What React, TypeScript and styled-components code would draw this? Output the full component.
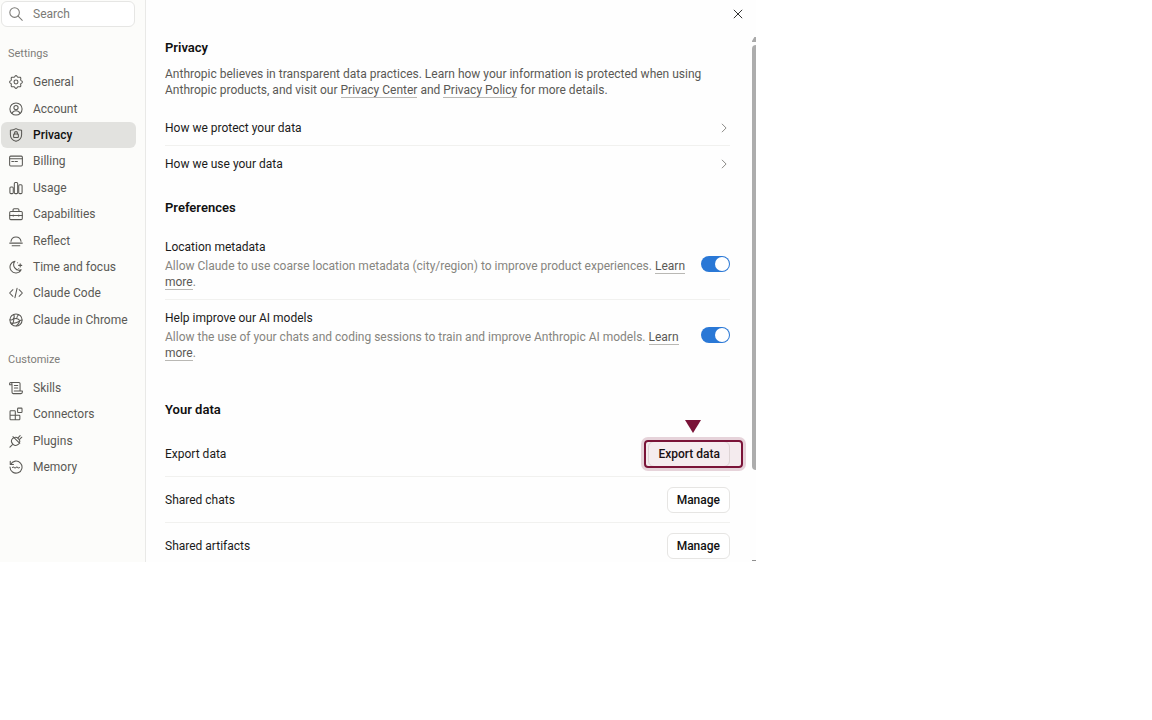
import React from "react";
import styled, { createGlobalStyle } from "styled-components";

const GlobalStyle = createGlobalStyle`
  * { box-sizing: border-box; }
  body {
    margin: 0;
    background: #fff;
    color: #1b1b1a;
    font-family: Roboto, "Liberation Sans", sans-serif;
    font-size: 12px;
    line-height: 16px;
  }
  button, input { font: inherit; color: inherit; }
  h1, h2, p, ul { margin: 0; padding: 0; }
`;

const Dialog = styled.div`
  display: flex;
  width: 100%;
  max-width: 756px;
  background: #fefefe;
`;

const Sidebar = styled.aside`
  flex: 0 0 146px;
  min-width: 0;
  padding: 1px 10px 0 1px;
  background: #fcfcfa;
  border-right: 1px solid #e9e9e7;
`;

const SearchBox = styled.label`
  display: flex;
  align-items: center;
  gap: 10px;
  height: 26px;
  padding: 0 7px;
  border: 1px solid #e6e6e4;
  border-radius: 6px;
  background: #fff;
  color: #7b7a76;
`;

const SearchInput = styled.input`
  flex: 1;
  width: 100%;
  min-width: 0;
  padding: 0;
  border: 0;
  outline: 0;
  background: none;
  &::placeholder { color: #7b7a76; opacity: 1; }
`;

const GroupLabel = styled.h2`
  padding: 19px 7px 0;
  color: #7e7d79;
  font-size: 11px;
  font-weight: 400;
  line-height: 16px;
`;

const NavList = styled.ul<{ $height: number }>`
  display: grid;
  grid-auto-rows: 1fr;
  min-height: ${(p) => p.$height}px;
  margin: 7px 0 0;
  list-style: none;
`;

const NavLink = styled.a<{ $active?: boolean }>`
  display: flex;
  align-items: center;
  gap: 10px;
  height: 100%;
  padding: 0 8px;
  border-radius: 6px;
  background: ${(p) => (p.$active ? "#e2e2df" : "transparent")};
  color: ${(p) => (p.$active ? "#111" : "#5a5955")};
  font-weight: ${(p) => (p.$active ? 500 : 400)};
  text-decoration: none;
  white-space: nowrap;
  svg { color: #5a5955; }
`;

const Icon = styled.svg.attrs({
  viewBox: "0 0 20 20",
  fill: "none",
  stroke: "currentColor",
  strokeLinecap: "round",
  strokeLinejoin: "round",
  "aria-hidden": true,
})<{ $size?: number }>`
  flex: none;
  width: ${(p) => p.$size ?? 14}px;
  height: ${(p) => p.$size ?? 14}px;
  stroke-width: 1.5;
`;

const Main = styled.main`
  display: flex;
  flex: 1;
  flex-direction: column;
  min-width: 0;
`;

const Header = styled.header`
  display: flex;
  justify-content: flex-end;
  height: 37px;
  padding: 4px 8px 0;
`;

const CloseButton = styled.button`
  display: flex;
  align-items: center;
  justify-content: center;
  width: 20px;
  height: 20px;
  padding: 0;
  border: 0;
  background: none;
`;

const ScrollArea = styled.div`
  display: flex;
  flex: 1;
`;

const Content = styled.div`
  flex: 1;
  min-width: 0;
  padding: 1px 22px 0 19px;
`;

const ScrollTrack = styled.div`
  display: flex;
  flex: 0 0 4px;
  flex-direction: column;
  justify-content: space-between;
  overflow: hidden;
`;

const ScrollUp = styled.div`
  height: 5px;
  background: #a9a9a9;
  clip-path: polygon(0 80%, 60% 0, 100% 0, 100% 100%, 0 100%);
`;

const ScrollThumb = styled.div`
  flex: 0 1 81%;
  margin: 3px 0 auto;
  border-radius: 4px 0 0 4px;
  background: #adadad;
`;

const ScrollDown = styled.div`
  height: 2px;
  background: linear-gradient(#8f8f8f 1px, transparent 1px);
`;

const SectionTitle = styled.h2<{ $gap?: number }>`
  padding-top: ${(p) => p.$gap ?? 0}px;
  color: #111;
  font-size: 13px;
  font-weight: 600;
  line-height: 20px;
`;

const Intro = styled.p`
  margin: 8px 0 12px;
  color: #5a5955;
`;

const TextLink = styled.a`
  color: #5a5955;
  text-decoration: none;
  border-bottom: 1px solid #b9b8b4;
`;

const Disclosure = styled.button<{ $last?: boolean }>`
  display: flex;
  align-items: center;
  justify-content: space-between;
  width: 100%;
  height: 36px;
  padding: 0;
  border: 0;
  border-bottom: 1px solid ${(p) => (p.$last ? "transparent" : "#f1f1ef")};
  background: none;
  text-align: left;
  svg { color: #7e7d79; }
`;

const Rows = styled.div`
  margin-top: 11px;
`;

const PreferenceRow = styled.div`
  display: flex;
  align-items: center;
  gap: 12px;
  padding: 9px 0;
  & + & { border-top: 1px solid #f1f1ef; }
`;

const PreferenceText = styled.div`
  flex: 1;
  min-width: 0;
`;

const PreferenceLabel = styled.label`
  display: block;
  margin-bottom: 2px;
  line-height: 18px;
`;

const Hint = styled.p`
  color: #86857f;
`;

const Toggle = styled.input.attrs({ type: "checkbox", role: "switch" })`
  appearance: none;
  flex: none;
  display: flex;
  align-items: center;
  justify-content: flex-start;
  width: 29px;
  height: 16px;
  margin: 0;
  padding: 0 1px;
  border-radius: 8px;
  background: #c9c8c4;
  &::before {
    content: "";
    width: 14px;
    height: 14px;
    border-radius: 50%;
    background: #fff;
  }
  &:checked { justify-content: flex-end; background: #2a78d6; }
`;

const DataRow = styled.div`
  display: flex;
  align-items: center;
  justify-content: space-between;
  padding: 10px 0 9px;
  & + & { border-top: 1px solid #f1f1ef; }
  &:last-child { padding-bottom: 3px; }
`;

const ActionButton = styled.button`
  height: 26px;
  padding: 0 9px;
  border: 1px solid #e6e5e3;
  border-radius: 6px;
  background: #fff;
  color: #111;
  font-weight: 500;
`;

const Highlighted = styled.div`
  position: relative;
`;

const HighlightRing = styled.span`
  position: absolute;
  inset: -1px -13px -1px -4px;
  border: 2px solid #7a1338;
  border-radius: 4px;
  background: rgba(122, 19, 56, 0.08);
  box-shadow: 0 0 0 3px rgba(122, 19, 56, 0.18);
  pointer-events: none;
`;

const HighlightArrow = styled.svg`
  position: absolute;
  left: calc(50% + 4px);
  bottom: calc(100% + 8px);
  width: 16px;
  height: 13px;
  margin-left: -8px;
  fill: #7a1338;
`;

const gearPath =
  Array.from({ length: 96 }, (_, i) => {
    const a = (i / 96) * Math.PI * 2;
    const r = 8.2 + 0.9 * Math.cos(8 * a);
    return `${i ? "L" : "M"}${(10 + r * Math.cos(a)).toFixed(2)} ${(10 + r * Math.sin(a)).toFixed(2)}`;
  }).join("") + "Z";

const icons: Record<string, React.ReactNode> = {
  General: (
    <>
      <path d={gearPath} />
      <circle cx="10" cy="10" r="2.8" />
    </>
  ),
  Account: (
    <>
      <circle cx="10" cy="10" r="8.7" />
      <circle cx="10" cy="8" r="3" />
      <path d="M4.4 16.2c1-2.3 3-3.6 5.6-3.6s4.600 1.300 5.600 3.600" />
    </>
  ),
  Privacy: (
    <>
      <path d="M10 .9c2.500 1.500 5 2.100 8 2.300v6.300c0 4.700-3.300 8-8 9.600-4.700-1.600-8-4.900-8-9.600V3.200c3-.2 5.500-.8 8-2.300Z" />
      <rect x="6.600" y="8.700" width="6.800" height="5" rx=".8" />
      <path d="M7.900 8.500V7.300a2.100 2.100 0 0 1 4.200 0v1.200" />
    </>
  ),
  Billing: (
    <>
      <rect x=".9" y="3" width="18.200" height="14" rx="1.500" />
      <path d="M1 6.800h18M4 10.800h2.500M8.500 10.800H12" />
    </>
  ),
  Usage: (
    <>
      <rect x="1.300" y="8.500" width="4.800" height="9.500" rx="1.500" />
      <rect x="7.600" y="2" width="4.800" height="16" rx="1.500" />
      <rect x="13.900" y="5.300" width="4.800" height="12.700" rx="1.500" />
    </>
  ),
  Capabilities: (
    <>
      <rect x="1" y="6.300" width="18" height="11.700" rx="1.500" />
      <path d="M5.800 6V4.200c0-1 .6-1.700 1.600-1.700h5.200c1 0 1.600.7 1.600 1.700V6M1 12h18M6 11.500v1.500M14 11.500v1.500" />
    </>
  ),
  Reflect: (
    <>
      <path d="M1 13h18M4.500 16.800h11M2.800 10.500a7.300 7.300 0 0 1 14.400 0" />
    </>
  ),
  "Time and focus": (
    <>
      <path d="M8.500 1.800A8.400 8.400 0 1 0 17.300 14 7.800 7.800 0 0 1 8.500 1.800Z" />
      <path d="M16 5.500v4.400M13.800 7.700h4.400M12.300 3.800v.2M14 12v.2" />
    </>
  ),
  "Claude Code": (
    <>
      <path d="M5.500 5.300.9 10l4.600 4.700M14.500 5.300l4.600 4.700-4.600 4.700M11.500 3.300l-3 13.400" />
    </>
  ),
  "Claude in Chrome": (
    <>
      <circle cx="10" cy="10" r="8.700" />
      <path d="M6.500 2.200c1.600 2.500 1.300 4.500-.3 6.300-1.300 1.400-3.200 1.700-4.800 1.300M6.200 8.500c3.200-1.200 6.800-.8 9.300 2.300M15.500 10.800c1-.4 2-.8 3-.8M15.500 10.800c-.5 3-2.500 5.500-5 7.500M13.800 2.300c-2 1.600-3 3.700-2.800 6M7 9c-.2 3.200-1 5.800-3 7.500M3.200 14.200c4 1.200 8-.3 11-2" />
    </>
  ),
  Skills: (
    <>
      <path d="M4.300 13.800V4.300C4.300 3 3.500 2 2.500 2S.9 2.900.9 4v1.300h3.400M2.500 2h11.700c1 0 1.600.7 1.600 1.700v10M7.500 14.200h11.600v1.600c0 1.300-.8 2.200-2 2.200H6c-1 0-1.700-.8-1.700-1.800v-2.400M7.700 6.500h4.800M7.700 10h4.800" />
    </>
  ),
  Connectors: (
    <>
      <path d="M2.500 5.300H8c.6 0 1 .4 1 1v11.900H2.500c-.6 0-1-.4-1-1V6.300c0-.6.400-1 1-1ZM1.500 11.700h13c.6 0 1 .4 1 1v4.500c0 .6-.4 1-1 1H9" />
      <rect x="12.300" y="1.600" width="6.300" height="6.300" rx="1" />
    </>
  ),
  Plugins: (
    <>
      <path d="M1.300 18.700 4.600 15.400M7.200 5.200c2.300-1 4-.7 5.600.9l1.200 1.200c1.600 1.600 1.900 3.500.9 5.600l-1.200 1.600c-2.500 2.200-5.800 2.200-8.200-.2s-2.600-5.500-.4-7.900ZM12.500 5.800l3.400-3.600M14.700 8l3.600-3.400M5.600 3.900l9.800 9.400" />
    </>
  ),
  Memory: (
    <>
      <path d="M2.300 6.300A8.600 8.600 0 1 1 1.400 10M1.800 1.800v4.700h4.600M5 10.700c.8-1 1.600-1 2.400 0s1.700 1 2.500 0 1.700-1 2.500 0 1.700 1 2.500 0" />
    </>
  ),
};

const settingsItems = [
  "General",
  "Account",
  "Privacy",
  "Billing",
  "Usage",
  "Capabilities",
  "Reflect",
  "Time and focus",
  "Claude Code",
  "Claude in Chrome",
];
const customizeItems = ["Skills", "Connectors", "Plugins", "Memory"];

function NavGroup({ items, height, active }: { items: string[]; height: number; active?: string }) {
  return (
    <NavList $height={height}>
      {items.map((name) => (
        <li key={name}>
          <NavLink href="#" $active={name === active} aria-current={name === active ? "page" : undefined}>
            <Icon>{icons[name]}</Icon>
            {name}
          </NavLink>
        </li>
      ))}
    </NavList>
  );
}

function Preference({ id, label, children }: { id: string; label: string; children: React.ReactNode }) {
  return (
    <PreferenceRow>
      <PreferenceText>
        <PreferenceLabel htmlFor={id}>{label}</PreferenceLabel>
        <Hint>
          {children} <TextLink href="#">Learn more</TextLink>.
        </Hint>
      </PreferenceText>
      <Toggle id={id} defaultChecked />
    </PreferenceRow>
  );
}

function Chevron() {
  return (
    <Icon $size={12}>
      <path d="M7 3.500 13.500 10 7 16.500" />
    </Icon>
  );
}

export default function App() {
  return (
    <>
      <GlobalStyle />
      <Dialog role="dialog" aria-label="Settings">
        <Sidebar>
          <SearchBox>
            <Icon>
              <circle cx="8" cy="8" r="6.800" />
              <path d="m13 13 6 6" />
            </Icon>
            <SearchInput type="text" placeholder="Search" aria-label="Search" />
          </SearchBox>
          <nav>
            <GroupLabel>Settings</GroupLabel>
            <NavGroup items={settingsItems} height={264} active="Privacy" />
            <GroupLabel>Customize</GroupLabel>
            <NavGroup items={customizeItems} height={105} />
          </nav>
        </Sidebar>
        <Main>
          <Header>
            <CloseButton aria-label="Close">
              <Icon $size={12}>
                <path d="m3.500 3.500 13 13M16.500 3.500l-13 13" />
              </Icon>
            </CloseButton>
          </Header>
          <ScrollArea>
            <Content>
              <section>
                <SectionTitle>Privacy</SectionTitle>
                <Intro>
                  Anthropic believes in transparent data practices. Learn how your information is protected when using
                  Anthropic products, and visit our <TextLink href="#">Privacy Center</TextLink> and{" "}
                  <TextLink href="#">Privacy Policy</TextLink> for more details.
                </Intro>
                <Disclosure>
                  How we protect your data
                  <Chevron />
                </Disclosure>
                <Disclosure $last>
                  How we use your data
                  <Chevron />
                </Disclosure>
              </section>
              <section>
                <SectionTitle $gap={16}>Preferences</SectionTitle>
                <Rows>
                  <Preference id="location" label="Location metadata">
                    Allow Claude to use coarse location metadata (city/region) to improve product experiences.
                  </Preference>
                  <Preference id="training" label="Help improve our AI models">
                    Allow the use of your chats and coding sessions to train and improve Anthropic AI models.
                  </Preference>
                </Rows>
              </section>
              <section>
                <SectionTitle $gap={30}>Your data</SectionTitle>
                <Rows>
                  <DataRow>
                    Export data
                    <Highlighted>
                      <ActionButton>Export data</ActionButton>
                      <HighlightRing />
                      <HighlightArrow viewBox="0 0 16 13" aria-hidden>
                        <path d="M0 0h16L8 13Z" />
                      </HighlightArrow>
                    </Highlighted>
                  </DataRow>
                  <DataRow>
                    Shared chats
                    <ActionButton>Manage</ActionButton>
                  </DataRow>
                  <DataRow>
                    Shared artifacts
                    <ActionButton>Manage</ActionButton>
                  </DataRow>
                </Rows>
              </section>
            </Content>
            <ScrollTrack aria-hidden>
              <ScrollUp />
              <ScrollThumb />
              <ScrollDown />
            </ScrollTrack>
          </ScrollArea>
        </Main>
      </Dialog>
    </>
  );
}
